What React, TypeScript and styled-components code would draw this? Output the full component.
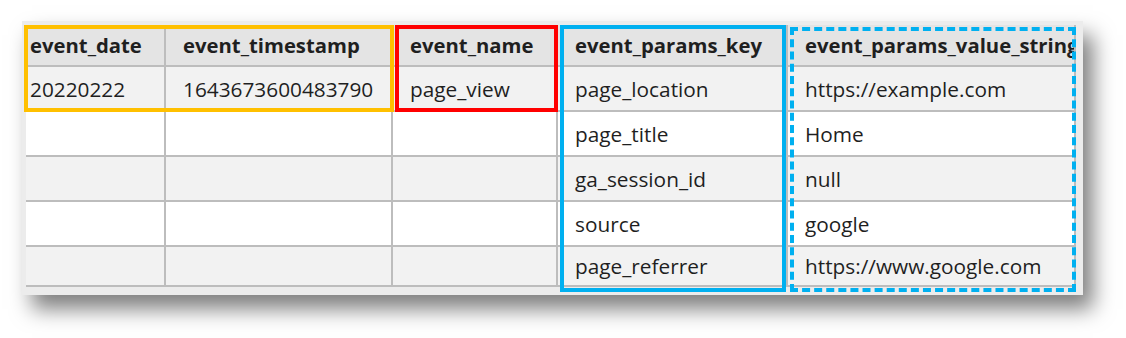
import React from "react";
import styled, { createGlobalStyle } from "styled-components";

const GlobalStyle = createGlobalStyle`
  body {
    margin: 0;
    background: #ffffff;
    font-family: "Open Sans", Roboto, "Liberation Sans", sans-serif;
  }
`;

const Page = styled.div`
  width: 1126px;
  height: 338px;
  padding: 21px 0 0 22px;
  box-sizing: border-box;
`;

const Card = styled.div`
  position: relative;
  width: 1061px;
  padding: 4px 7px 8px 4px;
  box-sizing: border-box;
  background: #ececec;
  box-shadow: 10px 14px 20px rgba(0, 0, 0, 0.5);
`;

const Table = styled.div`
  display: grid;
  grid-template-columns: 140px 227px 165px 230px 288px;
  grid-template-rows: 42px 45px 45px 45px 45px 40px;
  width: 1050px;
  overflow: hidden;
`;

const Cell = styled.div<{ $head?: boolean; $shade?: boolean; $tight?: boolean }>`
  display: flex;
  align-items: center;
  padding-left: ${(p) => (p.$tight ? "4px" : "17px")};
  border-right: 2px solid #bdbdbd;
  border-bottom: 2px solid #bdbdbd;
  background: ${(p) => (p.$head ? "#e4e4e4" : p.$shade ? "#f2f2f2" : "#ffffff")};
  color: #1f1f1f;
  font-size: ${(p) => (p.$head ? "20.3px" : "20.8px")};
  font-weight: ${(p) => (p.$head ? 700 : 400)};
  white-space: nowrap;
  overflow: hidden;
  min-width: 0;
`;

const Frame = styled.div<{ $color: string; $dashed?: boolean }>`
  position: absolute;
  box-sizing: border-box;
  border: 4px ${(p) => (p.$dashed ? "dashed" : "solid")} ${(p) => p.$color};
  pointer-events: none;
`;

const headers = [
  "event_date",
  "event_timestamp",
  "event_name",
  "event_params_key",
  "event_params_value_string",
];

const rows = [
  ["20220222", "1643673600483790", "page_view", "page_location", "https://example.com"],
  ["", "", "", "page_title", "Home"],
  ["", "", "", "ga_session_id", "null"],
  ["", "", "", "source", "google"],
  ["", "", "", "page_referrer", "https://www.google.com"],
];

export default function App() {
  return (
    <Page>
      <GlobalStyle />
      <Card>
        <Table>
          {headers.map((h, i) => (
            <Cell key={h} $head $tight={i === 0}>
              {h}
            </Cell>
          ))}
          {rows.map((row, r) =>
            row.map((v, c) => (
              <Cell key={`${r}-${c}`} $shade={r % 2 === 0} $tight={c === 0}>
                {v}
              </Cell>
            ))
          )}
        </Table>
        <Frame $color="#ffc000" style={{ left: 2, top: 4, width: 370, height: 87 }} />
        <Frame $color="#ff0000" style={{ left: 373, top: 4, width: 163, height: 87 }} />
        <Frame $color="#00b0f0" style={{ left: 538, top: 4, width: 226, height: 267 }} />
        <Frame $color="#00b0f0" $dashed style={{ left: 768, top: 6, width: 286, height: 265 }} />
      </Card>
    </Page>
  );
}
